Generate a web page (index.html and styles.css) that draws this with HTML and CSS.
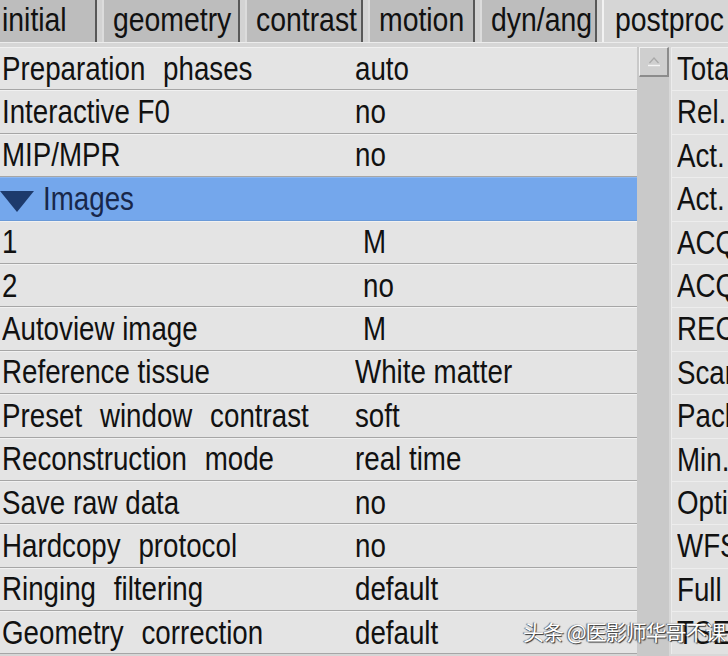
FILE: index.html
```html
<!DOCTYPE html>
<html>
<head>
<meta charset="utf-8">
<link rel="stylesheet" href="styles.css">
</head>
<body>
<div class="screen">
  <div class="tabs">
    <div class="tab w1"><span class="t">initial</span></div>
    <div class="tab w2"><span class="t">geometry</span></div>
    <div class="tab w3"><span class="t">contrast</span></div>
    <div class="tab w4"><span class="t">motion</span></div>
    <div class="tab w5"><span class="t">dyn/ang</span></div>
    <div class="tab active"><span class="t">postproc</span></div>
  </div>
  <div class="strip"></div>
  <div class="main">
    <div class="table">
      <div class="row"><div class="label"><span class="t wide">Preparation phases</span></div><div class="value"><span class="t">auto</span></div></div>
      <div class="row"><div class="label"><span class="t">Interactive F0</span></div><div class="value"><span class="t">no</span></div></div>
      <div class="row"><div class="label"><span class="t">MIP/MPR</span></div><div class="value"><span class="t">no</span></div></div>
      <div class="row group">
        <svg class="caret" width="34" height="22" viewBox="0 0 34 22"><polygon points="0,0 34,0 17,21" fill="#1d3a6c"/></svg>
        <span class="t">Images</span>
      </div>
      <div class="row"><div class="label"><span class="t">1</span></div><div class="value sub"><span class="t">M</span></div></div>
      <div class="row"><div class="label"><span class="t">2</span></div><div class="value sub"><span class="t">no</span></div></div>
      <div class="row"><div class="label"><span class="t">Autoview image</span></div><div class="value sub"><span class="t">M</span></div></div>
      <div class="row"><div class="label"><span class="t">Reference tissue</span></div><div class="value"><span class="t">White matter</span></div></div>
      <div class="row"><div class="label"><span class="t wide">Preset window contrast</span></div><div class="value"><span class="t">soft</span></div></div>
      <div class="row"><div class="label"><span class="t wide">Reconstruction mode</span></div><div class="value"><span class="t">real time</span></div></div>
      <div class="row"><div class="label"><span class="t">Save raw data</span></div><div class="value"><span class="t">no</span></div></div>
      <div class="row"><div class="label"><span class="t wide">Hardcopy protocol</span></div><div class="value"><span class="t">no</span></div></div>
      <div class="row"><div class="label"><span class="t wide">Ringing filtering</span></div><div class="value"><span class="t">default</span></div></div>
      <div class="row"><div class="label"><span class="t wide">Geometry correction</span></div><div class="value"><span class="t">default</span></div></div>
    </div>
    <div class="scrollbar">
      <div class="scroll-btn">
        <svg width="14" height="10" viewBox="0 0 14 10"><polyline points="2.5,6 7,1 11.5,6" fill="none" stroke="#a9a9a9" stroke-width="1.2"/><line x1="1" y1="8.5" x2="13" y2="8.5" stroke="#f4f4f4" stroke-width="1.4"/></svg>
      </div>
    </div>
    <div class="side">
      <div class="cell"><span class="t">Total</span></div>
      <div class="cell"><span class="t">Rel.</span></div>
      <div class="cell"><span class="t">Act.</span></div>
      <div class="cell"><span class="t">Act.</span></div>
      <div class="cell"><span class="t">ACQ</span></div>
      <div class="cell"><span class="t">ACQ</span></div>
      <div class="cell"><span class="t">REC</span></div>
      <div class="cell"><span class="t">Scan</span></div>
      <div class="cell"><span class="t">Pack</span></div>
      <div class="cell"><span class="t">Min.</span></div>
      <div class="cell"><span class="t">Opti</span></div>
      <div class="cell"><span class="t">WFS</span></div>
      <div class="cell"><span class="t">Full</span></div>
      <div class="cell"><span class="t">TSE</span></div>
    </div>
  </div>
  <div class="watermark">头条 @医影师华哥不课</div>
</div>
</body>
</html>
```
FILE: styles.css
```css
html, body {
  margin: 0;
  padding: 0;
  background: #d6d6d6;
}
.screen {
  position: relative;
  width: 728px;
  height: 656px;
  overflow: hidden;
  font-family: "Liberation Sans", Arial, sans-serif;
  font-size: 33px;
  color: #111;
  background: #d6d6d6;
}
.t {
  display: inline-block;
  white-space: nowrap;
  transform: scaleX(0.84);
  transform-origin: 0 50%;
}
.wide { word-spacing: 12px; }

/* tabs */
.tabs {
  display: flex;
  gap: 5px;
  height: 42px;
  background: #d3d3d3;
}
.tab {
  box-sizing: border-box;
  flex: none;
  height: 42px;
  line-height: 40px;
  padding-left: 9px;
  background: #bdbdbd;
  border-left: 2px solid #dcdcdc;
  border-right: 2px solid #585858;
  overflow: hidden;
}
.tab .t { transform: scaleX(0.86); }
.w1 { width: 97px; padding-left: 2px; border-left: none; }
.w2 { width: 138px; }
.w3 { width: 118px; }
.w4 { width: 107px; }
.w5 { width: 117px; }
.tab.active {
  flex: 1;
  background: #d6d6d6;
  border-left: 2px solid #f2f2f2;
  border-right: none;
  padding-left: 11px;
}
.strip {
  height: 5px;
  background: #d6d6d6;
  border-top: 1px solid #ececec;
  box-sizing: border-box;
}

/* main area */
.main {
  display: flex;
}
.table {
  width: 637px;
  flex: none;
}
.row {
  box-sizing: border-box;
  height: 43.4px;
  display: flex;
  align-items: center;
  background: #e4e4e4;
  border-top: 1px solid #f1f1f1;
  border-bottom: 1px solid #a6a6a6;
  overflow: hidden;
}
.label {
  width: 355px;
  flex: none;
  padding-left: 2px;
  box-sizing: border-box;
}
.value { flex: 1; }
.value.sub { padding-left: 8px; }
.row.group {
  background: #74a7ec;
  border-top-color: #8cb8f2;
  border-bottom-color: #6a9ad8;
  color: #18274a;
}
.caret {
  flex: none;
  margin: 6px 9px 0 0;
}

.scrollbar {
  width: 32px;
  flex: none;
  background: #c9c9c9;
  padding: 0 0 0 2px;
  box-sizing: border-box;
  height: 610px;
}
.scroll-btn {
  box-sizing: border-box;
  width: 30px;
  height: 30px;
  background: #cfcfcf;
  border-top: 1px solid #f2f2f2;
  border-left: 1px solid #f2f2f2;
  border-right: 2px solid #8c8c8c;
  border-bottom: 2px solid #8c8c8c;
  display: flex;
  align-items: center;
  justify-content: center;
}

.side {
  flex: 1;
  min-width: 0;
  background: #d8d8d8;
  overflow: hidden;
}
.cell {
  box-sizing: border-box;
  height: 43.4px;
  line-height: 41px;
  padding-left: 5px;
  margin-left: 2px;
  background: #e1e1e1;
  border-top: 1px solid #ededed;
  border-left: 1px solid #ececec;
  white-space: nowrap;
  overflow: hidden;
}

.watermark {
  position: absolute;
  left: 523px;
  top: 616px;
  font-family: "Noto Sans CJK SC", sans-serif;
  font-size: 21px;
  color: #ffffff;
  letter-spacing: -1px;
  text-shadow: 1px 1px 1px #333, -1px 0 1px #555;
  white-space: nowrap;
}
```
